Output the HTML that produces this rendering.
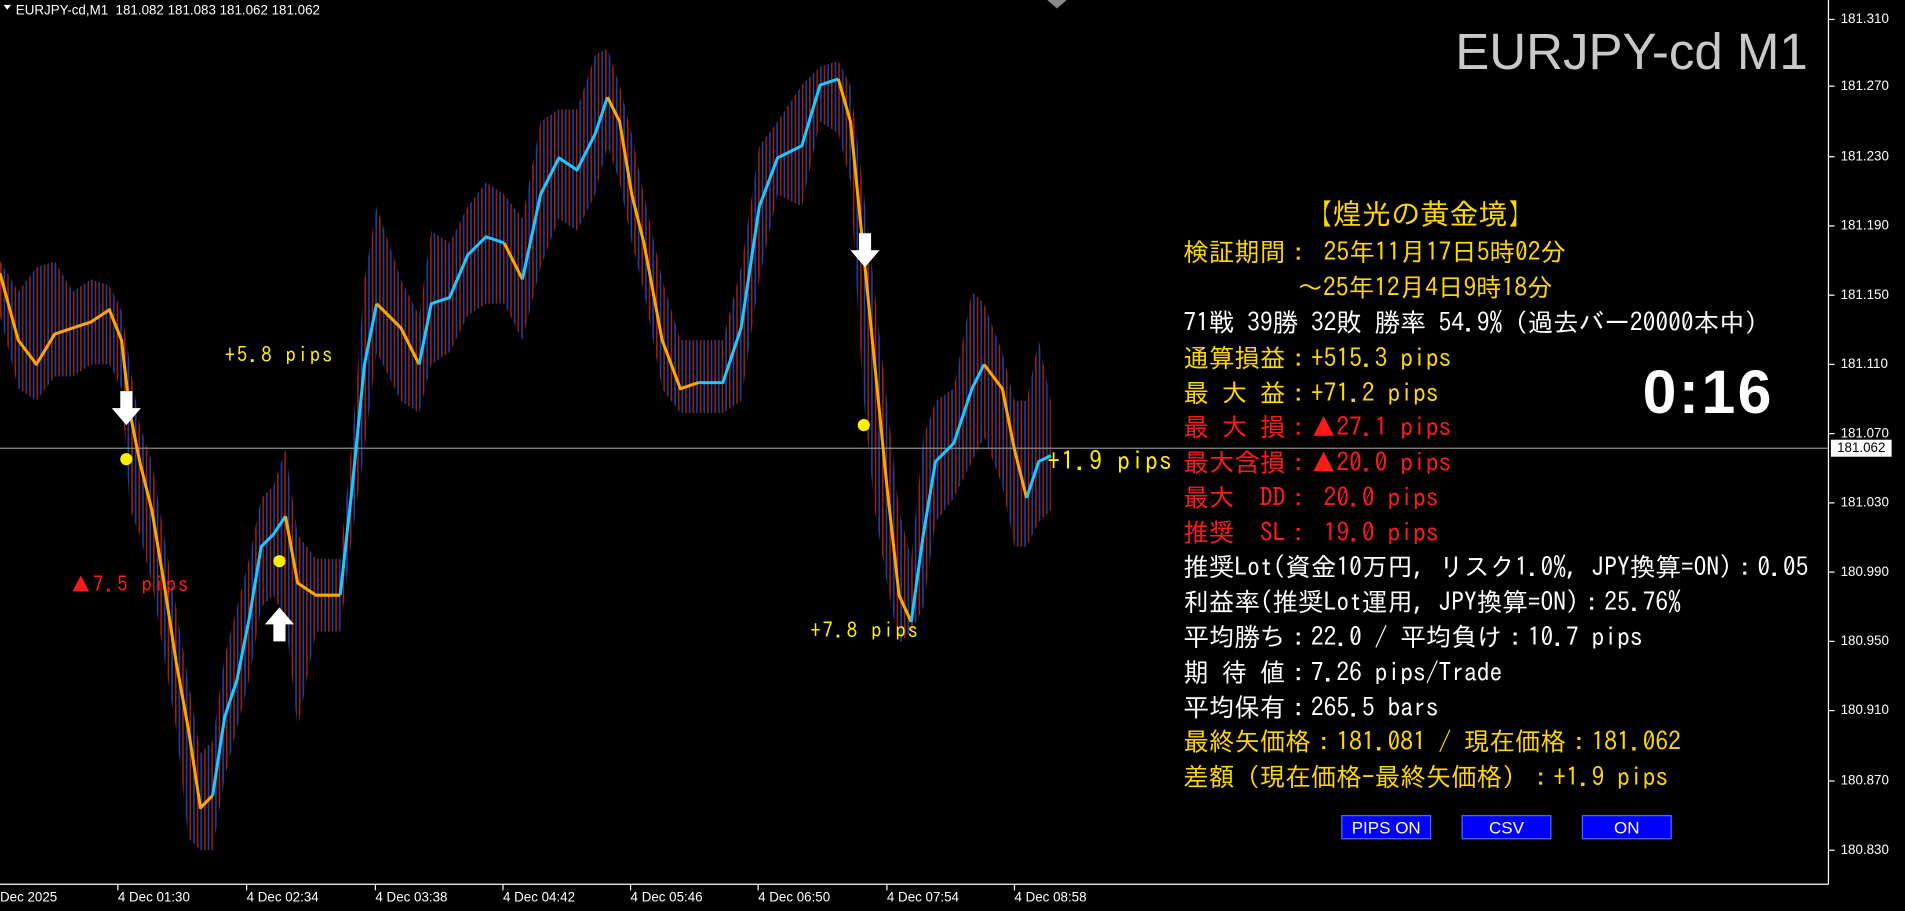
<!DOCTYPE html>
<html><head><meta charset="utf-8">
<style>
html,body{margin:0;padding:0;background:#000;overflow:hidden;width:1905px;height:911px}
#w{position:absolute;left:0;top:0;width:1568px;height:750px;transform-origin:0 0;transform:scale(1.21492,1.21467);font-family:"Liberation Sans","Noto Sans CJK JP",sans-serif;color:#fff}
.a{position:absolute;white-space:nowrap}
.p{font-size:11px;color:#fff;left:1515px}
.t{font-size:11px;color:#fff;top:733px}
.i{left:974px;font-size:21px;line-height:24px;font-family:"IPAGothic","Noto Sans CJK JP",monospace}
.y{color:#ffd700}.r{color:#ff1a1a}.wh{color:#fff}
.g{font-family:"IPAGothic","Noto Sans CJK JP",monospace}
.b{position:absolute;top:671px;width:72px;height:18px;background:#0000ff;border:1px solid #4a6cff;color:#fff;font-size:14px;text-align:center;line-height:18px}
</style></head><body><div id="w">
<svg width="1568" height="750" style="position:absolute;left:0;top:0">
<defs>
<pattern id="st" width="6" height="10" patternUnits="userSpaceOnUse">
<rect x="0" width="1.3" height="10" fill="#c0281c"/><rect x="3" width="1.3" height="10" fill="#3050c8"/>
</pattern>
</defs>
<polygon fill="url(#st)" opacity="0.8" points="0,215 15,240 30,220 45,215 60,240 75,230 90,235 100,255 107,300 115,350 125,380 135,440 145,500 155,560 165,620 175,610 185,540 195,500 205,460 215,410 225,400 235,370 245,440 260,460 280,460 290,360 300,230 310,170 330,230 345,260 355,190 370,200 385,170 400,150 415,160 430,180 445,100 460,90 475,90 490,45 500,40 510,70 520,110 530,160 545,230 560,280 575,280 595,280 610,220 625,120 640,100 660,70 675,55 690,50 700,70 710,150 720,240 730,330 740,420 750,460 760,360 770,330 785,320 800,240 810,250 825,290 835,330 845,330 855,280 865,330
865,420 855,430 845,450 835,450 825,400 810,360 800,380 785,410 770,430 760,500 750,520 740,530 730,480 720,420 710,320 700,150 690,110 675,100 660,170 640,160 625,230 610,330 595,340 575,340 560,340 545,320 530,240 520,200 510,150 500,120 490,160 475,190 460,180 445,220 430,280 415,250 400,250 385,260 370,290 355,300 345,340 330,330 310,290 300,370 290,440 280,520 260,520 245,600 235,510 225,490 215,500 205,560 195,600 185,640 175,700 165,700 155,690 145,600 135,540 125,480 115,440 107,420 100,320 90,300 75,300 60,310 45,310 30,330 15,320 0,260"/>
<line x1="0" y1="369" x2="1505" y2="369" stroke="#8a8a8a" stroke-width="1"/>
<g fill="none" stroke-width="2.5" stroke-linejoin="round">
<polyline stroke="#ffa500" points="0,225 15,280 30,300 45,275 60,270 75,265 90,255 100,280 107,340 115,380 125,420 135,480 145,545 155,600 165,665 175,655"/>
<polyline stroke="#1ec8ff" points="175,655 185,590 195,560 205,510 215,450 225,440 235,425"/>
<polyline stroke="#ffa500" points="235,425 245,480 260,490 280,490"/>
<polyline stroke="#1ec8ff" points="280,490 290,400 300,300 310,250"/>
<polyline stroke="#ffa500" points="310,250 330,270 345,300"/>
<polyline stroke="#1ec8ff" points="345,300 355,250 370,245 385,210 400,195 415,200"/>
<polyline stroke="#ffa500" points="415,200 430,230"/>
<polyline stroke="#1ec8ff" points="430,230 445,160 460,130 475,140 490,110 500,80"/>
<polyline stroke="#ffa500" points="500,80 510,100 520,160 530,200 545,280 560,320 575,315"/>
<polyline stroke="#1ec8ff" points="575,315 595,315 610,270 625,170 640,130 660,120 675,70 690,65"/>
<polyline stroke="#ffa500" points="690,65 700,100 710,200 720,300 730,400 740,490 750,512"/>
<polyline stroke="#1ec8ff" points="750,512 760,440 770,380 785,365 800,320 810,300"/>
<polyline stroke="#ffa500" points="810,300 825,320 835,370 845,410"/>
<polyline stroke="#1ec8ff" points="845,410 855,380 865,375"/>
</g>
<circle cx="104" cy="378" r="5" fill="#ffee00"/><circle cx="230" cy="462" r="5" fill="#ffee00"/><circle cx="711" cy="350" r="5" fill="#ffee00"/>
<path d="M99,322h10v14h7l-12,14l-12,-14h7z" fill="#fff"/>
<path d="M707,192h10v14h7l-12,14l-12,-14h7z" fill="#fff"/>
<path d="M225,528h10v-14h7l-12,-14l-12,14h7z" fill="#fff"/>
<line x1="1505" y1="0" x2="1505" y2="728" stroke="#fff"/>
<line x1="0" y1="728" x2="1505" y2="728" stroke="#fff"/>
<path d="M862,0h16l-8,7z" fill="#888"/>
<path d="M3,4h6l-3,4z" fill="#fff"/>
<g stroke="#fff">
<line x1="1505" y1="16" x2="1510" y2="16"/><line x1="1505" y1="71" x2="1510" y2="71"/><line x1="1505" y1="129" x2="1510" y2="129"/><line x1="1505" y1="186" x2="1510" y2="186"/><line x1="1505" y1="243" x2="1510" y2="243"/><line x1="1505" y1="300" x2="1510" y2="300"/><line x1="1505" y1="357" x2="1510" y2="357"/><line x1="1505" y1="414" x2="1510" y2="414"/><line x1="1505" y1="471" x2="1510" y2="471"/><line x1="1505" y1="528" x2="1510" y2="528"/><line x1="1505" y1="585" x2="1510" y2="585"/><line x1="1505" y1="643" x2="1510" y2="643"/><line x1="1505" y1="700" x2="1510" y2="700"/>
<line x1="97" y1="728" x2="97" y2="733"/><line x1="203" y1="728" x2="203" y2="733"/><line x1="309" y1="728" x2="309" y2="733"/><line x1="414" y1="728" x2="414" y2="733"/><line x1="519" y1="728" x2="519" y2="733"/><line x1="624" y1="728" x2="624" y2="733"/><line x1="730" y1="728" x2="730" y2="733"/><line x1="835" y1="728" x2="835" y2="733"/>
</g>
</svg>
<div class="a" style="left:13px;top:3px;font-size:11px">EURJPY-cd,M1&nbsp; 181.082 181.083 181.062 181.062</div>
<div class="a" style="right:80px;top:19px;font-size:42px;color:#c8c8c8">EURJPY-cd M1</div>
<div class="a p" style="top:10px">181.310</div><div class="a p" style="top:65px">181.270</div><div class="a p" style="top:123px">181.230</div><div class="a p" style="top:180px">181.190</div><div class="a p" style="top:237px">181.150</div><div class="a p" style="top:294px">181.110</div><div class="a p" style="top:351px">181.070</div><div class="a p" style="top:408px">181.030</div><div class="a p" style="top:465px">180.990</div><div class="a p" style="top:522px">180.950</div><div class="a p" style="top:579px">180.910</div><div class="a p" style="top:637px">180.870</div><div class="a p" style="top:694px">180.830</div>
<div class="a" style="left:1507px;top:362px;width:50px;height:14px;background:#fff;color:#000;font-size:11px;line-height:14px;text-align:center">181.062</div>
<div class="a t" style="left:0">Dec 2025</div><div class="a t" style="left:97px">4 Dec 01:30</div><div class="a t" style="left:203px">4 Dec 02:34</div><div class="a t" style="left:309px">4 Dec 03:38</div><div class="a t" style="left:414px">4 Dec 04:42</div><div class="a t" style="left:519px">4 Dec 05:46</div><div class="a t" style="left:624px">4 Dec 06:50</div><div class="a t" style="left:730px">4 Dec 07:54</div><div class="a t" style="left:835px">4 Dec 08:58</div>
<div class="a g" style="left:185px;top:284px;font-size:17px;letter-spacing:1.5px;color:#ffee00">+5.8 pips</div>
<div class="a g" style="left:58px;top:473px;font-size:17px;letter-spacing:1.5px;color:#ff1a1a">▲7.5 pips</div>
<div class="a g" style="left:667px;top:511px;font-size:17px;letter-spacing:1.5px;color:#ffee00">+7.8 pips</div>
<div class="a g" style="left:862px;top:369px;font-size:21px;letter-spacing:1px;color:#ffee00">+1.9 pips</div>
<div class="a y g" style="left:1073px;top:164px;font-size:24px">【煌光の黄金境】</div>
<div class="a i y" style="top:196px">検証期間：&nbsp;25年11月17日5時02分</div>
<div class="a i y" style="top:225px;left:1068px">～25年12月4日9時18分</div>
<div class="a i wh" style="top:254px">71戦 39勝 32敗 勝率 54.9%（過去バー20000本中）</div>
<div class="a i y" style="top:283px">通算損益：+515.3 pips</div>
<div class="a i y" style="top:312px">最 大 益：+71.2 pips</div>
<div class="a i r" style="top:340px">最 大 損：▲27.1 pips</div>
<div class="a i r" style="top:369px">最大含損：▲20.0 pips</div>
<div class="a i r" style="top:398px">最大&nbsp; DD：&nbsp;20.0 pips</div>
<div class="a i r" style="top:427px">推奨&nbsp; SL：&nbsp;19.0 pips</div>
<div class="a i wh" style="top:455px">推奨Lot(資金10万円, リスク1.0%, JPY換算=ON)：0.05</div>
<div class="a i wh" style="top:484px">利益率(推奨Lot運用, JPY換算=ON)：25.76%</div>
<div class="a i wh" style="top:513px">平均勝ち：22.0 / 平均負け：10.7 pips</div>
<div class="a i wh" style="top:542px">期 待 値：7.26 pips/Trade</div>
<div class="a i wh" style="top:571px">平均保有：265.5 bars</div>
<div class="a i y" style="top:599px">最終矢価格：181.081 / 現在価格：181.062</div>
<div class="a i y" style="top:628px">差額（現在価格-最終矢価格）：+1.9 pips</div>
<div class="a" style="left:1352px;top:294px;font-size:50px;font-weight:bold;letter-spacing:2px">0:16</div>
<div class="b" style="left:1104px">PIPS ON</div><div class="b" style="left:1203px">CSV</div><div class="b" style="left:1302px">ON</div>
</div></body></html>
